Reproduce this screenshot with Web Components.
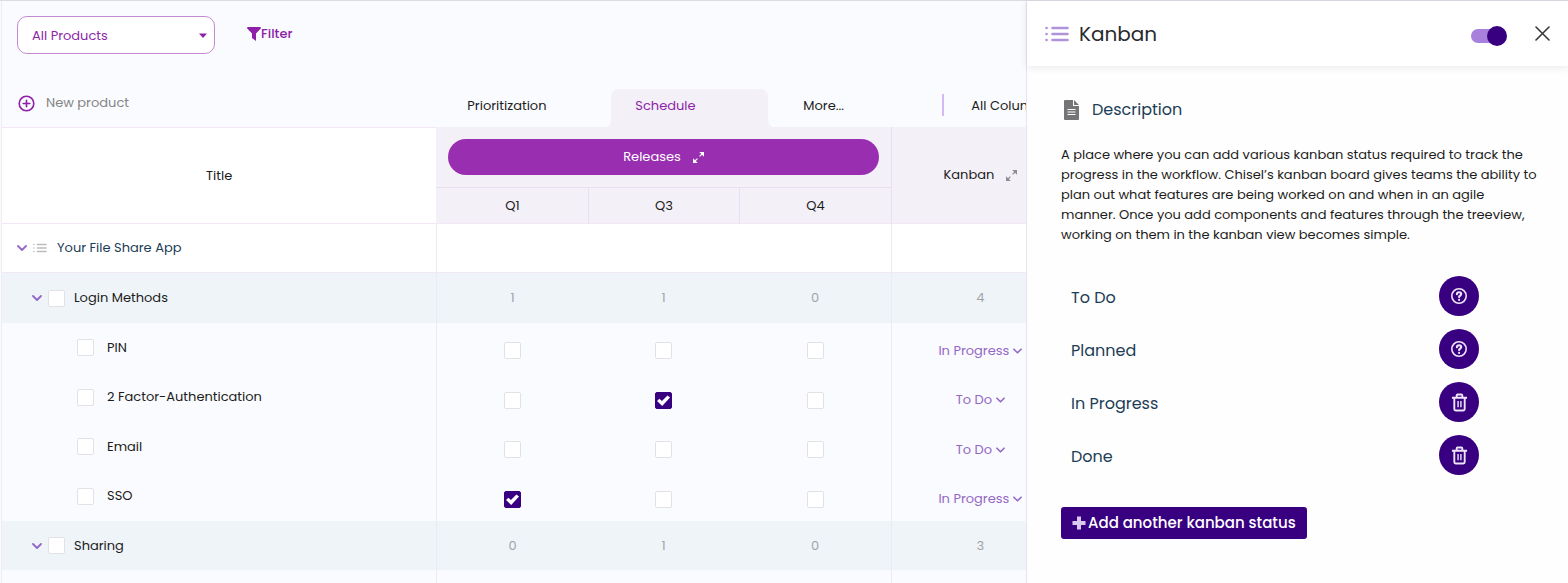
<!DOCTYPE html>
<html lang="en">
<head>
<meta charset="utf-8">
<meta name="viewport" content="width=device-width, initial-scale=1">
<title>Kanban</title>
<style>
  :root {
    --violet: #380080;
    --purple: #8e1fa8;
    --soft: #9468c4;
    --line: #f2e8f5;
    --lavender: #f3f0f8;
    --navy: #1c3d56;
  }
  body {
    margin: 0;
    height: 100vh;
    overflow: hidden;
    background: #f9fbfe;
    color: #1c1c20;
    font-family: Poppins, Inter, "Liberation Sans", sans-serif;
    font-size: 13px;
    line-height: 20px;
  }
</style>
</head>
<body>
<product-app>
  <board-toolbar slot="main"></board-toolbar>
  <view-tabs slot="main"></view-tabs>
  <board-table slot="main"></board-table>
  <side-panel slot="side">
    <span slot="title">Kanban</span>
    <span slot="heading">Description</span>
    <span slot="text">A place where you can add various kanban status required to track the progress in the workflow. Chisel’s kanban board gives teams the ability to plan out what features are being worked on and when in an agile manner. Once you add components and features through the treeview, working on them in the kanban view becomes simple.</span>
    <status-item icon="help">To Do</status-item>
    <status-item icon="help">Planned</status-item>
    <status-item icon="trash">In Progress</status-item>
    <status-item icon="trash">Done</status-item>
  </side-panel>
</product-app>

<script>
const icons = {
  chevron: `<svg width="10" height="6" viewBox="0 0 10 6" fill="none" stroke="currentColor" stroke-width="1.8" stroke-linecap="round" stroke-linejoin="round"><path d="M1 1l4 4 4-4"/></svg>`,
  list: `<svg viewBox="0 0 24 16" fill="none" stroke="currentColor" stroke-width="2.6" stroke-linecap="round"><path d="M7.500 2H22.500M7.500 8H22.500M7.500 14H22.500M1.500 2h.1M1.500 8h.1M1.500 14h.1"/></svg>`,
  expand: `<svg width="11" height="11" viewBox="0 0 11 11" fill="currentColor" stroke="currentColor"><path stroke="none" d="M6.200 0H11v4.800zM0 6.200V11h4.800z"/><path fill="none" stroke-width="1.200" d="M9.500 1.500L6.600 4.400M1.500 9.500l2.900-2.900"/></svg>`,
  help: `<svg width="18" height="18" viewBox="0 0 18 18" fill="none" stroke="currentColor" stroke-linecap="round"><circle cx="9" cy="9" r="7.200" stroke-width="1.600"/><path stroke-width="2.100" d="M6.900 7.200c.1-2.700 4.300-2.600 4.300-.1 0 1.500-2.100 1.500-2.100 3M9.100 12.800v.1"/></svg>`,
  trash: `<svg width="17" height="19" viewBox="0 0 18 20" fill="none" stroke="currentColor" stroke-width="2" stroke-linejoin="round"><path d="M1 5h16M6 5V2.500Q6 1.500 7 1.500h4q1 0 1 1V5M3.500 5v12q0 1.500 1.500 1.500h8q1.500 0 1.500-1.500V5"/><path stroke-width="1.500" d="M7.500 8.500v6.500M10.500 8.500v6.500"/></svg>`
};

class ProductApp extends HTMLElement {
  constructor() {
    super();
    this.attachShadow({ mode: "open" });
  }

  connectedCallback() {
    this.shadowRoot.innerHTML = `
      <style>
        :host {
          display: grid;
          grid-template-columns: minmax(0, 1.893fr) minmax(0, 1fr);
          box-sizing: border-box;
          height: 100%;
          border-top: 1px solid #dfdbe2;
        }
        main {
          overflow: hidden;
          margin-left: 1px;
          border-left: 1px solid #eeebf2;
        }
        aside {
          background: #fefefe;
          border-left: 1px solid #e6e4ec;
        }
      </style>
      <main><slot name="main"></slot></main>
      <aside><slot name="side"></slot></aside>
    `;
  }
}

class BoardToolbar extends HTMLElement {
  constructor() {
    super();
    this.attachShadow({ mode: "open" });
  }

  connectedCallback() {
    this.shadowRoot.innerHTML = `
      <style>
        :host {
          display: flex;
          align-items: center;
          gap: 32px;
          height: 38px;
          padding: 15px;
          color: var(--purple);
        }
        label { display: grid; align-items: center; }
        label > * { grid-area: 1 / 1; }
        label svg { justify-self: end; margin-right: 8px; pointer-events: none; }
        select {
          appearance: none;
          box-sizing: border-box;
          width: 198px;
          height: 38px;
          padding: 2px 24px 0 14px;
          border: 1px solid #c58bd2;
          border-radius: 10px;
          background: #fff;
          color: inherit;
          font: inherit;
        }
        button {
          display: flex;
          align-items: center;
          padding: 0 0 2px;
          border: 0;
          background: none;
          color: inherit;
          font: inherit;
          font-weight: 500;
        }
      </style>
      <label>
        <select aria-label="Product"><option>All Products</option></select>
        <svg width="8" height="5" viewBox="0 0 8 5" fill="currentColor"><path d="M0 .5h8L4 5z"/></svg>
      </label>
      <button type="button">
        <svg width="14" height="14" viewBox="0 0 14 14" fill="currentColor"><path d="M.5 0h13q.8 1-.2 2L9 6.500V14l-4-3V6.500L.7 2q-1-1-.2-2z"/></svg>
        Filter
      </button>
    `;
  }
}

class ViewTabs extends HTMLElement {
  constructor() {
    super();
    this.attachShadow({ mode: "open" });
  }

  connectedCallback() {
    this.shadowRoot.innerHTML = `
      <style>
        :host {
          display: grid;
          grid-template-columns: 43.1% minmax(0, 1fr);
          height: 38px;
          margin-top: 20px;
        }
        button {
          border: 0;
          background: none;
          color: inherit;
          font: inherit;
          text-align: left;
          white-space: nowrap;
        }
        .new {
          display: flex;
          align-items: center;
          gap: 11px;
          padding: 0 16px 10px;
          color: #858585;
        }
        .new svg { color: var(--purple); }
        nav { display: flex; align-items: flex-start; gap: 6px; }
        .group { display: flex; gap: 11px; }
        .tab {
          position: relative;
          flex: none;
          width: 157px;
          height: 38px;
          padding: 0 24px 4px;
        }
        .divider + .tab { padding-left: 21px; }
        .tab[aria-current] {
          border-radius: 8px 8px 0 0;
          background: var(--lavender);
          color: var(--purple);
        }
        /* flared feet of the open tab */
        .tab[aria-current]::before,
        .tab[aria-current]::after {
          content: "";
          position: absolute;
          bottom: 0;
          width: 4px;
          height: 8px;
          background: var(--lavender);
        }
        .tab[aria-current]::before { right: 100%; clip-path: polygon(100% 0, 100% 100%, 0 100%, 70% 70%); }
        .tab[aria-current]::after { left: 100%; clip-path: polygon(0 0, 0 100%, 100% 100%, 30% 70%); }
        .divider { flex: none; width: 2px; height: 22px; margin-top: 5px; background: #d6b8f6; }
      </style>
      <button class="new" type="button">
        <svg width="17" height="17" viewBox="0 0 17 17" fill="none" stroke="currentColor" stroke-width="1.600" stroke-linecap="round"><circle cx="8.500" cy="8.500" r="7.300"/><path d="M8.500 5.200v6.600M5.200 8.500h6.600"/></svg>
        New product
      </button>
      <nav>
        <div class="group">
          <button class="tab" type="button">Prioritization</button>
          <button class="tab" type="button" aria-current="page">Schedule</button>
          <button class="tab" type="button">More...</button>
        </div>
        <span class="divider"></span>
        <button class="tab" type="button">All Columns</button>
      </nav>
    `;
  }
}

const quarters = ["Q1", "Q3", "Q4"];
const rows = [
  { type: "app", name: "Your File Share App", values: ["", "", ""], status: "" },
  { type: "component", name: "Login Methods", values: [1, 1, 0], status: 4 },
  { type: "feature", name: "PIN", values: [false, false, false], status: "In Progress" },
  { type: "feature", name: "2 Factor-Authentication", values: [false, true, false], status: "To Do" },
  { type: "feature", name: "Email", values: [false, false, false], status: "To Do" },
  { type: "feature", name: "SSO", values: [true, false, false], status: "In Progress" },
  { type: "component", name: "Sharing", values: [0, 1, 0], status: 3 },
  { type: "blank", name: "", values: ["", "", ""], status: "" }
];
const statuses = ["To Do", "Planned", "In Progress", "Done"];

class BoardTable extends HTMLElement {
  constructor() {
    super();
    this.attachShadow({ mode: "open" });
  }

  connectedCallback() {
    this.render();
  }

  titleCell(row) {
    const toggle = `<button class="toggle" type="button" aria-label="Collapse">${icons.chevron}</button>`;
    if (row.type === "app") return `<div class="name">${toggle}${icons.list}<span>${row.name}</span></div>`;
    if (row.type === "component") return `<div class="name">${toggle}<label><input type="checkbox">${row.name}</label></div>`;
    if (row.type === "feature") return `<div class="name"><label><input type="checkbox">${row.name}</label></div>`;
    return "";
  }

  valueCell(row, value, i) {
    if (row.type !== "feature") return `<td>${value}</td>`;
    return `<td><input type="checkbox" aria-label="${row.name} ${quarters[i]}" ${value ? "checked" : ""}></td>`;
  }

  statusCell(row) {
    if (row.type !== "feature") return `<td class="edge">${row.status}</td>`;
    const options = statuses.map((s) => `<option ${s === row.status ? "selected" : ""}>${s}</option>`).join("");
    return `<td class="edge"><label class="status"><select aria-label="${row.name} status">${options}</select>${icons.chevron}</label></td>`;
  }

  render() {
    this.shadowRoot.innerHTML = `
      <style>
        :host { display: block; }
        table {
          width: 104.2%;
          table-layout: fixed;
          border-collapse: separate;
          border-spacing: 0;
        }
        .c-title { width: 40.7%; }
        .c-quarter { width: 14.2%; }
        th, td { box-sizing: border-box; padding: 0; }
        th { font-weight: 400; background: var(--lavender); }
        thead .title { background: #fff; border-top: 1px solid var(--line); border-bottom: 1px solid var(--line); }
        .releases { height: 61px; border-bottom: 1px solid #eadff2; }
        .quarter { height: 36px; border-left: 1px solid #eadff2; border-bottom: 1px solid var(--line); }
        .quarter.first { border-left-color: var(--lavender); }
        .kanban { border-left: 1px solid #eadff2; border-bottom: 1px solid var(--line); }
        .pill {
          display: flex;
          align-items: center;
          justify-content: center;
          gap: 12px;
          box-sizing: border-box;
          width: calc(100% - 24px);
          height: 36px;
          margin: 0 12px;
          border: 0;
          border-radius: 18px;
          background: #992eb0;
          color: #fff;
          font: inherit;
        }
        .head { display: flex; align-items: center; justify-content: center; gap: 12px; }
        .head svg { color: #8c8c92; }

        tbody tr { height: 49px; }
        tbody tr:nth-child(even) { height: 50px; }
        tbody th { text-align: left; background: none; }
        tbody td { text-align: center; color: #a2a4a8; }
        tbody td:nth-child(2), .edge { border-left: 1px solid var(--line); }
        .app { background: #fff; }
        .app th, .app td { border-bottom: 1px solid var(--line); }
        .component { background: #eff4f9; }
        .feature td { padding-top: 6px; }

        .name { display: flex; align-items: center; }
        .name label { display: flex; align-items: center; }
        .app .name { padding-left: 15px; gap: 6px; color: var(--navy); }
        .app .name > svg { width: 14px; height: 14px; color: #bcbcc0; }
        .app .name span { margin-left: 4px; }
        .component .name { padding-left: 30px; gap: 6px; }
        .component label { gap: 9px; }
        .feature .name { padding-left: 75px; }
        .feature .name label { gap: 13px; }
        .toggle { display: flex; padding: 0; border: 0; background: none; color: var(--soft); }

        input {
          appearance: none;
          display: inline-grid;
          place-content: center;
          box-sizing: border-box;
          width: 17px;
          height: 17px;
          margin: 0;
          border: 1px solid #e2e2e6;
          border-radius: 2px;
          background: #fff;
          vertical-align: middle;
        }
        input:checked { border-color: var(--violet); background: var(--violet); }
        input:checked::before {
          content: "";
          width: 13px;
          height: 11px;
          background: #fff;
          clip-path: polygon(0 56%, 18% 34%, 38% 56%, 80% 4%, 100% 24%, 40% 100%);
        }
        .status { display: inline-flex; align-items: center; gap: 4px; color: var(--soft); }
        .status svg { width: 9px; }
        select {
          appearance: none;
          field-sizing: content;
          padding: 0;
          border: 0;
          background: none;
          color: inherit;
          font: inherit;
        }
      </style>
      <table>
        <colgroup>
          <col class="c-title"><col class="c-quarter"><col class="c-quarter"><col class="c-quarter"><col>
        </colgroup>
        <thead>
          <tr>
            <th class="title" rowspan="2">Title</th>
            <th class="releases" colspan="3"><button class="pill" type="button">Releases ${icons.expand}</button></th>
            <th class="kanban" rowspan="2"><div class="head">Kanban ${icons.expand}</div></th>
          </tr>
          <tr>${quarters.map((q, i) => `<th class="quarter ${i ? "" : "first"}">${q}</th>`).join("")}</tr>
        </thead>
        <tbody>
          ${rows.map((row) => `
            <tr class="${row.type}">
              <th scope="row">${this.titleCell(row)}</th>
              ${row.values.map((v, i) => this.valueCell(row, v, i)).join("")}
              ${this.statusCell(row)}
            </tr>`).join("")}
        </tbody>
      </table>
    `;
  }
}

class SidePanel extends HTMLElement {
  constructor() {
    super();
    this.attachShadow({ mode: "open" });
  }

  connectedCallback() {
    this.shadowRoot.innerHTML = `
      <style>
        :host { display: block; }
        header {
          display: flex;
          align-items: center;
          height: 65px;
          padding: 0 18px;
          background: #fff;
          box-shadow: 0 1px 8px rgba(40, 20, 60, 0.1);
        }
        header > svg { width: 24px; height: 16px; color: #b193dc; }
        h1, h2, p { margin: 0; font-weight: 400; }
        h1 { flex: 1; margin-left: 10px; font-size: 20px; line-height: 24px; color: #2a2a2e; }
        input {
          appearance: none;
          display: grid;
          align-items: center;
          width: 36px;
          height: 20px;
          margin: 4px 28px 0 0;
        }
        input::before, input::after { content: ""; grid-area: 1 / 1; }
        input::before { width: 30px; height: 14px; border-radius: 7px; background: #a881dc; }
        input::after { justify-self: end; width: 20px; height: 20px; border-radius: 50%; background: var(--violet); }
        .close { display: flex; padding: 0; border: 0; background: none; color: #38383c; }
        section { padding: 34px 28px 34px 34px; }
        h2 { display: flex; align-items: center; gap: 13px; padding-left: 3px; font-size: 16px; line-height: 20px; color: var(--navy); }
        p { margin-top: 25px; }
        .items { display: grid; gap: 13px; margin: 31px 61px 32px 10px; }
        .add {
          display: flex;
          align-items: center;
          gap: 2px;
          height: 32px;
          padding: 0 11px;
          border: 0;
          border-radius: 3px;
          background: var(--violet);
          color: #fff;
          font: inherit;
          font-size: 15px;
          font-weight: 500;
        }
        .add svg { color: #d9c9ee; }
      </style>
      <header>
        ${icons.list}
        <h1><slot name="title"></slot></h1>
        <input type="checkbox" role="switch" aria-label="Show column" checked>
        <button class="close" type="button" aria-label="Close">
          <svg width="15" height="15" viewBox="0 0 15 15" fill="none" stroke="currentColor" stroke-width="1.600" stroke-linecap="round"><path d="M1 1l13 13M14 1L1 14"/></svg>
        </button>
      </header>
      <section>
        <h2>
          <svg width="15" height="20" viewBox="0 0 15 20"><path fill="#757578" d="M1 0h8v6h6v13q0 1-1 1H1q-1 0-1-1V1q0-1 1-1zM10 0l5 5h-5z"/><path stroke="#fff" stroke-width="1.200" d="M3.500 9.500h8M3.500 12h8M3.500 14.500h8"/></svg>
          <slot name="heading"></slot>
        </h2>
        <p><slot name="text"></slot></p>
        <div class="items"><slot></slot></div>
        <button class="add" type="button">
          <svg width="14" height="14" viewBox="0 0 14 14" stroke="currentColor" stroke-width="4"><path d="M7 .5v13M.5 7h13"/></svg>
          Add another kanban status
        </button>
      </section>
    `;
  }
}

class StatusItem extends HTMLElement {
  constructor() {
    super();
    this.attachShadow({ mode: "open" });
  }

  connectedCallback() {
    const icon = this.getAttribute("icon");
    this.shadowRoot.innerHTML = `
      <style>
        :host {
          display: flex;
          align-items: center;
          justify-content: space-between;
          font-size: 16px;
          color: var(--navy);
        }
        span { padding-top: 4px; }
        button {
          display: grid;
          place-content: center;
          width: 40px;
          height: 40px;
          padding: 0;
          border: 0;
          border-radius: 50%;
          background: var(--violet);
          color: #ede4f8;
        }
      </style>
      <span><slot></slot></span>
      <button type="button" aria-label="${icon === "trash" ? "Delete" : "Help"}">${icons[icon]}</button>
    `;
  }
}

customElements.define("product-app", ProductApp);
customElements.define("board-toolbar", BoardToolbar);
customElements.define("view-tabs", ViewTabs);
customElements.define("board-table", BoardTable);
customElements.define("side-panel", SidePanel);
customElements.define("status-item", StatusItem);
</script>
</body>
</html>
